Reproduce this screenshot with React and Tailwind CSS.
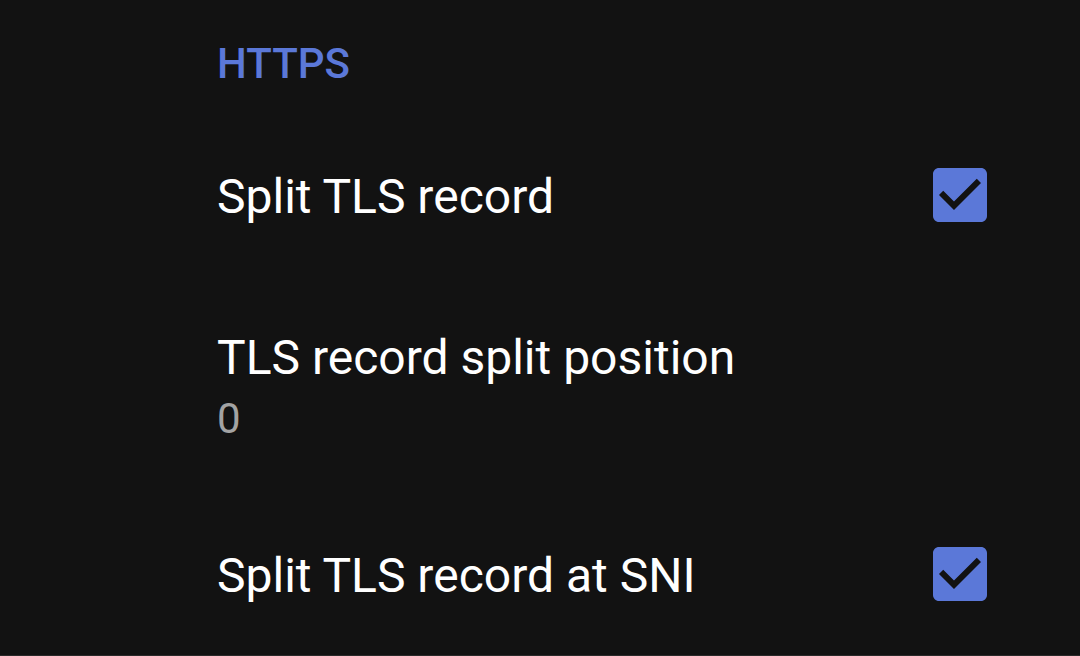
export default function App() {
  const font = { fontFamily: "Roboto, 'Noto Sans', sans-serif" };

  const Check = () => (
    <svg width="72" height="72" viewBox="0 0 24 24" className="-mr-[9px]">
      <path
        fill="#5b78d8"
        d="M19 3H5c-1.11 0-2 .9-2 2v14c0 1.1.89 2 2 2h14c1.11 0 2-.9 2-2V5c0-1.1-.89-2-2-2zm-9 14l-5-5 1.41-1.41L10 14.17l7.59-7.59L19 8l-9 9z"
      />
    </svg>
  );

  return (
    <div className="h-[656px] w-[1080px] overflow-hidden bg-[#121212] flex flex-col" style={font}>
      <div className="flex-1 min-h-0 overflow-hidden pl-[217px] pr-[93px]">
        <div className="pt-[39px] text-[42px] leading-[50px] font-medium text-[#5b78d8]">HTTPS</div>

        <div className="h-[212px] flex items-center justify-between">
          <span className="mt-1 text-[48px] leading-[56px] text-white">Split TLS record</span>
          <Check />
        </div>

        <div className="h-[167px] flex flex-col justify-center pt-[4px]">
          <span className="text-[48px] leading-[56px] text-white">TLS record split position</span>
          <span className="mt-2 text-[42px] leading-[50px] text-[#a3a3a3]">0</span>
        </div>

        <div className="h-[212px] flex items-center justify-between">
          <span className="mt-1 text-[48px] leading-[56px] text-white">Split TLS record at SNI</span>
          <Check />
        </div>
      </div>
      <div className="h-px bg-[#2a2a2a]" />
    </div>
  );
}
